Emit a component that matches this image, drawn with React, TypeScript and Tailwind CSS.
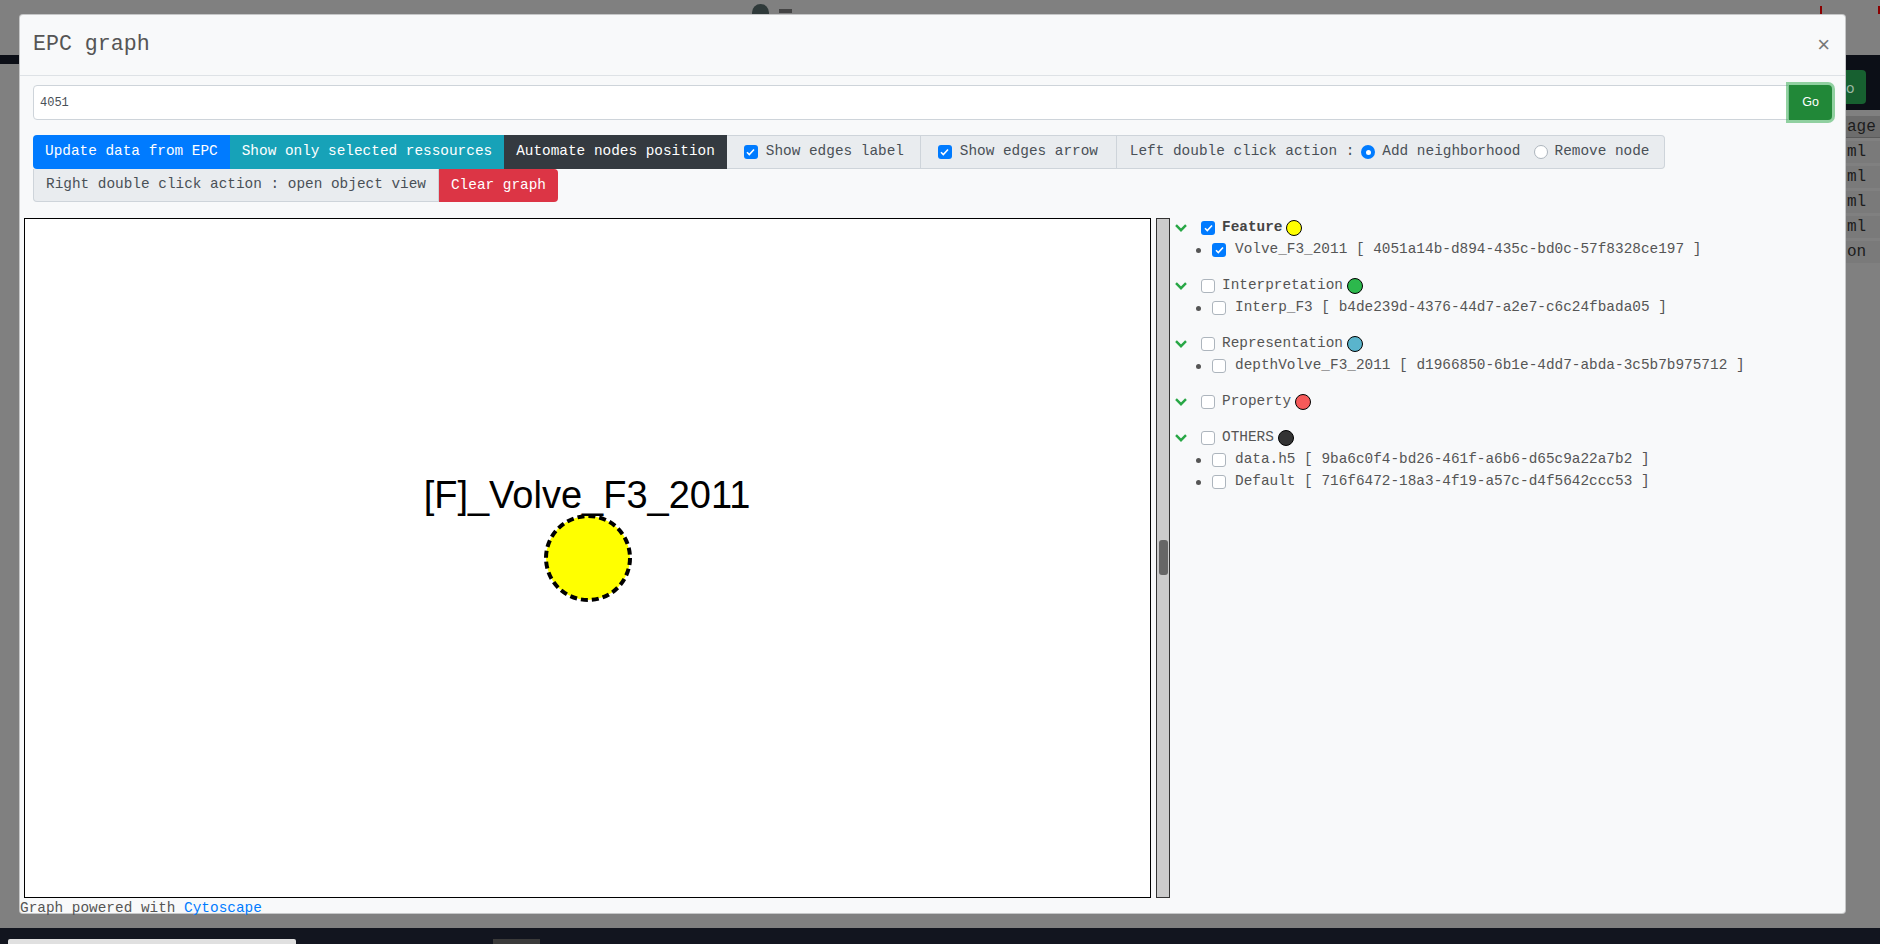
import React from 'react';

const mono = "font-['Liberation_Mono','Courier_New',monospace]";

type Item = { name: string; uuid: string; checked?: boolean };
type Group = { label: string; color: string; checked?: boolean; bold?: boolean; items: Item[] };

const groups: Group[] = [
  {
    label: 'Feature',
    color: '#ffff00',
    checked: true,
    bold: true,
    items: [{ name: 'Volve_F3_2011', uuid: '4051a14b-d894-435c-bd0c-57f8328ce197', checked: true }],
  },
  {
    label: 'Interpretation',
    color: '#2cb84c',
    items: [{ name: 'Interp_F3', uuid: 'b4de239d-4376-44d7-a2e7-c6c24fbada05' }],
  },
  {
    label: 'Representation',
    color: '#5ab4cc',
    items: [{ name: 'depthVolve_F3_2011', uuid: 'd1966850-6b1e-4dd7-abda-3c5b7b975712' }],
  },
  { label: 'Property', color: '#f65a5a', items: [] },
  {
    label: 'OTHERS',
    color: '#333333',
    items: [
      { name: 'data.h5', uuid: '9ba6c0f4-bd26-461f-a6b6-d65c9a22a7b2' },
      { name: 'Default', uuid: '716f6472-18a3-4f19-a57c-d4f5642ccc53' },
    ],
  },
];

function Check({ checked }: { checked?: boolean }) {
  if (checked) {
    return (
      <span className="w-[14px] h-[14px] rounded-[3px] bg-[#007bff] flex items-center justify-center shrink-0">
        <svg width="9" height="8" viewBox="0 0 9 8">
          <path d="M1 4.2l2.3 2.3L8 1.5" fill="none" stroke="white" strokeWidth="1.6" />
        </svg>
      </span>
    );
  }
  return <span className="block w-[14px] h-[14px] rounded-[3px] bg-white border border-[#adb5bd] shrink-0"></span>;
}

function Radio({ checked }: { checked?: boolean }) {
  if (checked) {
    return (
      <span className="w-[14px] h-[14px] rounded-full bg-[#007bff] flex items-center justify-center shrink-0">
        <span className="block w-[5px] h-[5px] rounded-full bg-white"></span>
      </span>
    );
  }
  return <span className="block w-[14px] h-[14px] rounded-full bg-white border border-[#adb5bd] shrink-0"></span>;
}

function Chevron() {
  return (
    <svg width="12" height="8" viewBox="0 0 12 8" className="shrink-0">
      <path d="M1 1.2l5 5 5-5" fill="none" stroke="#28a745" strokeWidth="2.4" />
    </svg>
  );
}

function Dot({ color }: { color: string }) {
  return (
    <span
      className="block w-[16px] h-[16px] rounded-full border-[1.5px] border-black shrink-0"
      style={{ backgroundColor: color }}
    ></span>
  );
}

function Tree() {
  return (
    <div className="flex flex-col text-[14.4px] text-[#555]">
      {groups.map((g) => (
        <div key={g.label} className="flex flex-col mb-[14px]">
          <div className="h-[22px] flex items-center">
            <Chevron />
            <span className="ml-[14px]">
              <Check checked={g.checked} />
            </span>
            <span className={'ml-[7px] ' + (g.bold ? 'font-bold text-[#444]' : '')}>{g.label}</span>
            <span className="ml-[4px]">
              <Dot color={g.color} />
            </span>
          </div>
          {g.items.map((it) => (
            <div key={it.uuid} className="h-[22px] flex items-center">
              <span className="block ml-[21px] w-[5px] h-[5px] rounded-full bg-[#555]"></span>
              <span className="ml-[11px]">
                <Check checked={it.checked} />
              </span>
              <span className="ml-[9px] whitespace-pre">
                {it.name} [ {it.uuid} ]
              </span>
            </div>
          ))}
        </div>
      ))}
    </div>
  );
}

function Backdrop() {
  return (
    <div className="w-[1880px] h-[944px] bg-[#808080] flex flex-col overflow-hidden">
      <div className="h-[55px] flex items-start">
        <div className="ml-[752px] mt-[4px] w-[18px] h-[10px] rounded-t-full bg-[#2f3a3a]"></div>
        <div className="ml-[10px] mt-[9px] w-[14px] h-[4px] bg-[#444]"></div>
        <div className="ml-[1028px] mt-[6px] w-[2px] h-[8px] bg-[#8b0000]"></div>
        <div className="ml-[56px] mt-[6px] w-[2px] h-[8px] bg-[#8b0000]"></div>
      </div>
      <div className="h-[55px] flex flex-col">
        <div className="h-[9px] bg-[#0c0f17]"></div>
        <div className="flex-1 flex justify-end">
          <div className="w-[34px] bg-[#0c0f17] flex items-center">
            <div className="w-[20px] h-[34px] bg-[#176030] rounded-r-[4px] flex items-center text-[#9fb9a6] text-[14px]">o</div>
          </div>
        </div>
      </div>
      <div className={'flex flex-col items-end text-[#1c1c1c] text-[16px] ' + mono}>
        <div className="mt-[6px] h-[22px] w-[34px] bg-[#6d6d6d] border-b border-[#5a5a5a] pl-[1px] leading-[22px]">age</div>
        {['ml', 'ml', 'ml', 'ml', 'on'].map((t, i) => (
          <div key={i} className="mt-[3px] h-[22px] w-[34px] bg-[#7a7a7a] pl-[1px] leading-[22px]">{t}</div>
        ))}
      </div>
      <div className="flex-1 flex items-end justify-start">
        <div className="ml-[761px] mb-[17px] w-[12px] h-[13px] bg-[#5f5f5f] border border-[#333]"></div>
      </div>
      <div className="h-[16px] bg-[#12151f] shrink-0 flex items-end">
        <div className="ml-[8px] w-[288px] h-[5px] bg-[#e0e0e0] rounded-t-[2px]"></div>
        <div className="ml-[197px] w-[47px] h-[5px] bg-[#3a3a3a]"></div>
      </div>
    </div>
  );
}

export default function App() {
  return (
    <div className="relative w-[1880px] h-[944px] overflow-hidden">
      <Backdrop />

      {/* modal */}
      <div className={'absolute left-[19px] top-[14px] w-[1827px] bg-[#f8f9fa] rounded-[4px] border border-black/20 flex flex-col ' + mono}>
        <div className="h-[61px] px-[13px] flex items-center justify-between border-b border-[#dee2e6]">
          <span className="text-[21.6px] text-[#555] mt-[-2px]">EPC graph</span>
          <span className="text-[22px] text-[#777] mr-[2px] font-['Liberation_Sans',sans-serif] leading-none">×</span>
        </div>

        <div className="px-[13px] pt-[9px] flex flex-col">
          <div className="flex h-[35px]">
            <div className="flex-1 bg-white border border-[#ced4da] rounded-l-[4px] flex items-center px-[6px] text-[12px] text-[#495057]">
              4051
            </div>
            <div className="w-[43px] bg-[#218838] text-white text-[12.5px] flex items-center justify-center rounded-r-[4px] ring-[3px] ring-[#28a745]/50 font-['Liberation_Sans',sans-serif]">
              Go
            </div>
          </div>

          <div className="mt-[15px] flex h-[34px] text-[14.4px]">
            <div className="bg-[#007bff] text-white px-[12px] flex items-center rounded-l-[4px]">Update data from EPC</div>
            <div className="bg-[#17a2b8] text-white px-[12px] flex items-center">Show only selected ressources</div>
            <div className="bg-[#343a40] text-white px-[12px] flex items-center">Automate nodes position</div>
            <div className="bg-[#e9ecef] text-[#495057] border border-[#ced4da] border-l-0 w-[194px] pl-[17px] flex items-center gap-[8px]">
              <Check checked />
              Show edges label
            </div>
            <div className="bg-[#e9ecef] text-[#495057] border border-[#ced4da] border-l-0 w-[196px] pl-[17px] flex items-center gap-[8px]">
              <Check checked />
              Show edges arrow
            </div>
            <div className="bg-[#e9ecef] text-[#495057] border border-[#ced4da] border-l-0 w-[548px] pl-[13px] flex items-center whitespace-pre rounded-r-[4px]">
              Left double click action :
              <span className="ml-[7px]"><Radio checked /></span>
              <span className="ml-[7px]">Add neighborhood</span>
              <span className="ml-[13px]"><Radio /></span>
              <span className="ml-[7px]">Remove node</span>
            </div>
          </div>
          <div className="flex h-[33px] text-[14.4px]">
            <div className="bg-[#e9ecef] text-[#495057] border border-[#ced4da] border-t-0 px-[12px] flex items-center rounded-bl-[4px]">
              Right double click action : open object view
            </div>
            <div className="bg-[#dc3545] text-white px-[12px] flex items-center rounded-r-[4px]">Clear graph</div>
          </div>
        </div>

        <div className="mt-[16px] px-[4px] flex items-start gap-[5px]">
          <div className="relative w-[1127px] h-[680px] bg-white border border-black shrink-0">
            <svg width="1125" height="678" className="absolute left-0 top-0">
              <text x="562" y="289" textAnchor="middle" fontSize="38" fontFamily="Liberation Sans, Arial, sans-serif" fill="#000">
                [F]_Volve_F3_2011
              </text>
              <circle cx="563" cy="339" r="42" fill="#ffff00" stroke="#000" strokeWidth="4" strokeDasharray="7 4" />
            </svg>
          </div>
          <div className="w-[14px] h-[680px] bg-[#cbcbcb] border border-[#333] shrink-0 flex flex-col items-center">
            <div className="mt-[321px] w-[9px] h-[35px] rounded-[3px] bg-[#666]"></div>
          </div>
          <div className="mt-[-1px]">
            <Tree />
          </div>
        </div>

        <div className="h-[15px] text-[14.4px] leading-[20px] text-[#555] whitespace-pre">
          Graph powered with <span className="text-[#007bff]">Cytoscape</span>
        </div>
      </div>
    </div>
  );
}
